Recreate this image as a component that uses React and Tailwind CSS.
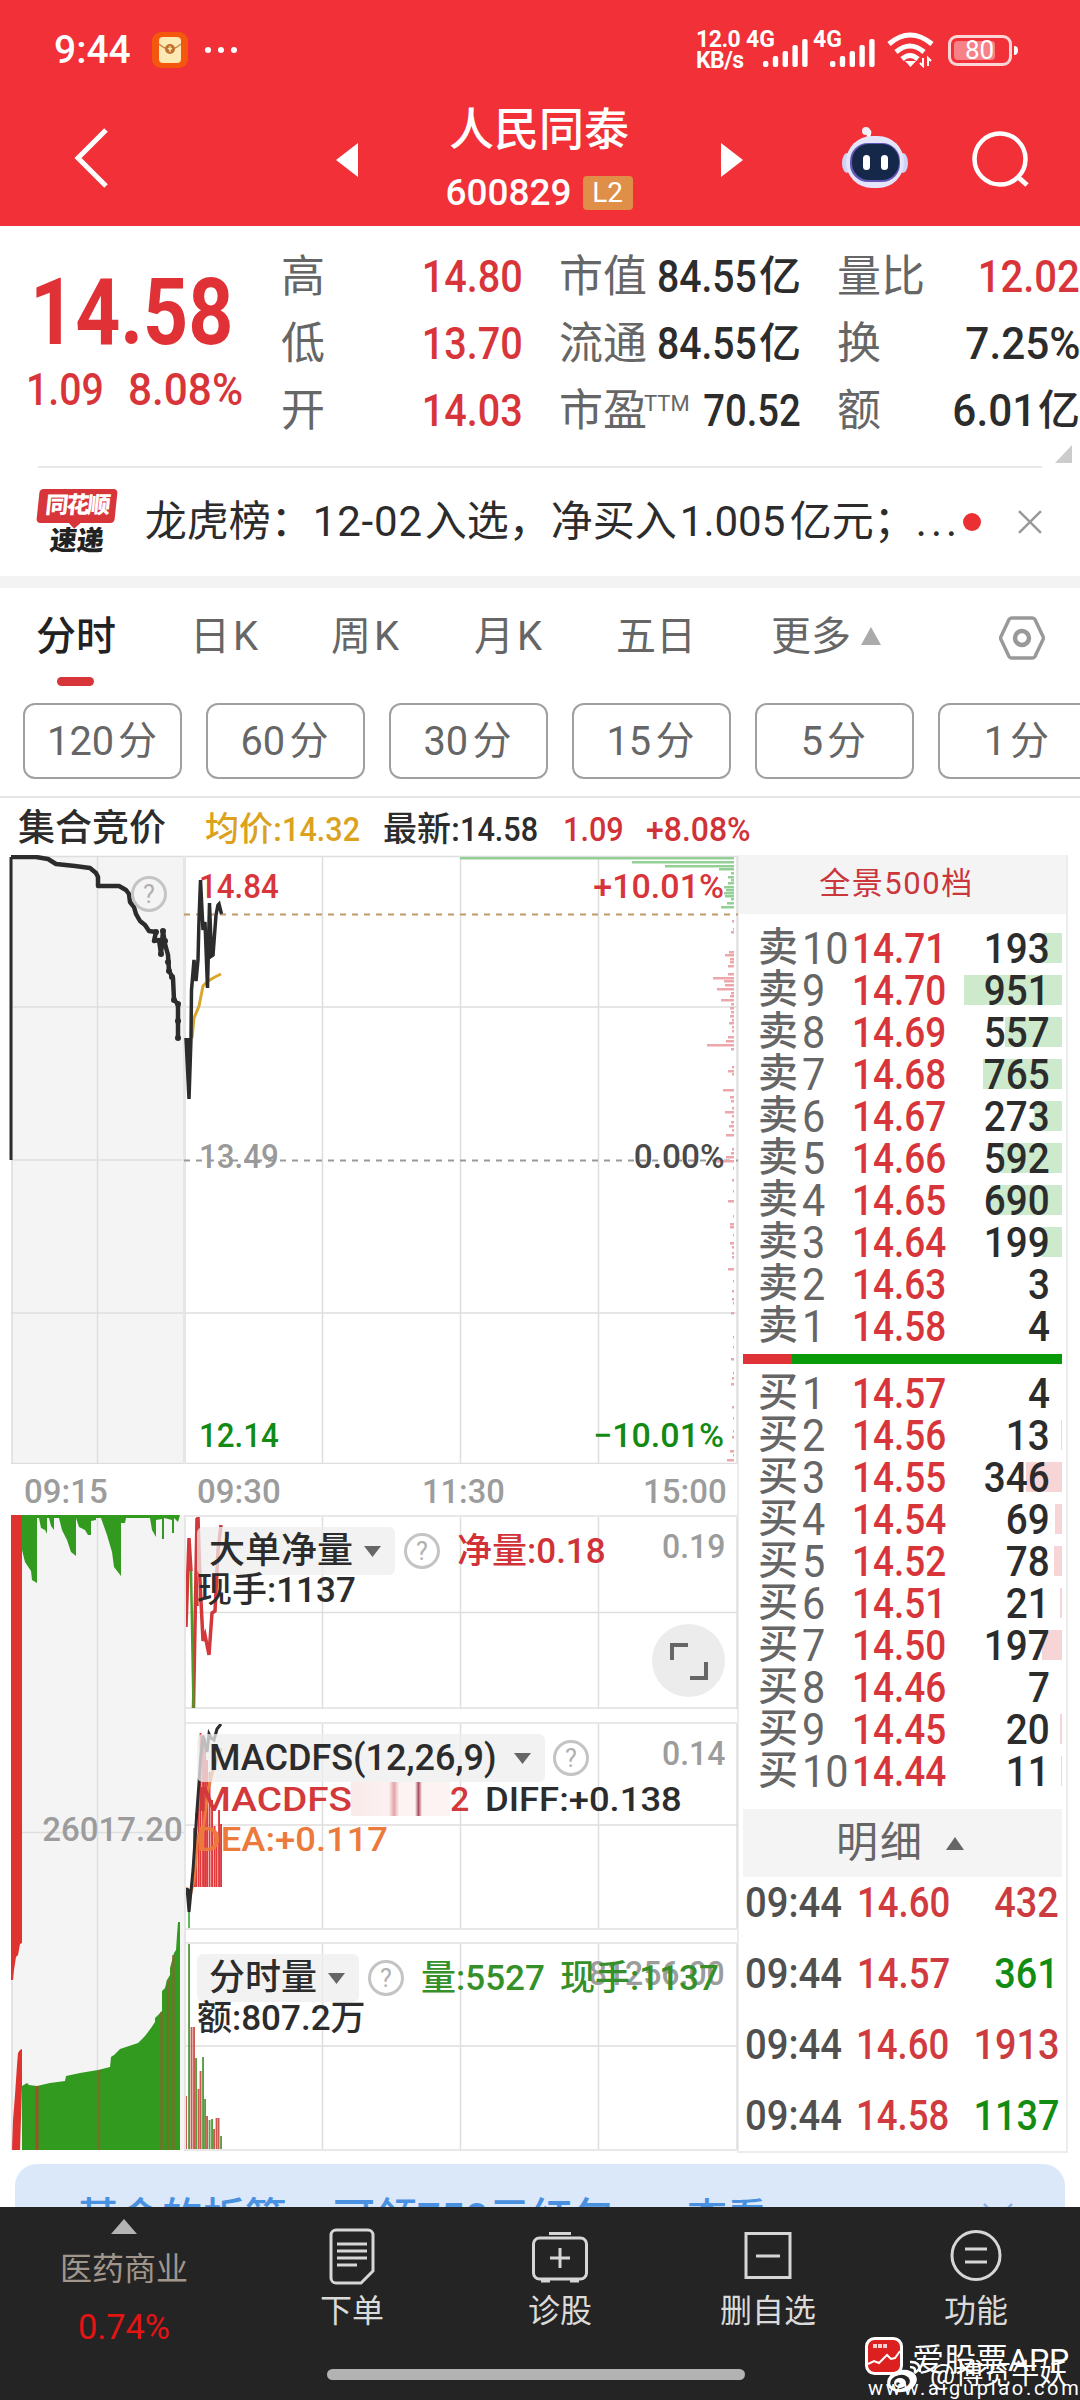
const TABS = [
  { label: '分时', cls: 'w-[154px] font-medium text-[#222]', active: true },
  { label: '日K', cls: 'w-[141px] tracking-[3px]' },
  { label: '周K', cls: 'w-[143px] tracking-[3px]' },
  { label: '月K', cls: 'w-[142px] tracking-[3px]' },
  { label: '五日', cls: 'w-[155px]' },
  { label: '更多', cls: 'w-[87px]' },
]

const MINUTES = ['120', '60', '30', '15', '5', '1']

const SELLS = [
  [10, '14.71', 193],
  [9, '14.70', 951],
  [8, '14.69', 557],
  [7, '14.68', 765],
  [6, '14.67', 273],
  [5, '14.66', 592],
  [4, '14.65', 690],
  [3, '14.64', 199],
  [2, '14.63', 3],
  [1, '14.58', 4],
]

const BUYS = [
  [1, '14.57', 4],
  [2, '14.56', 13],
  [3, '14.55', 346],
  [4, '14.54', 69],
  [5, '14.52', 78],
  [6, '14.51', 21],
  [7, '14.50', 197],
  [8, '14.46', 7],
  [9, '14.45', 20],
  [10, '14.44', 11],
]

const TRADES = [
  ['14.60', 432, true],
  ['14.57', 361, false],
  ['14.60', 1913, true],
  ['14.58', 1137, false],
]

// [y, width] of the chip distribution bars, right edge is x=734
const ASK_BARS = [
  [858, 274], [862, 102], [866, 69], [869, 15], [873, 3], [877, 6], [880, 3], [883, 6],
  [887, 10], [890, 8], [893, 10], [896, 9], [899, 3], [903, 7], [907, 13],
]
const BID_BARS = [
  [921, 2], [929, 1], [932, 3], [952, 5], [955, 9], [959, 4], [962, 4], [966, 6], [974, 6], [978, 21],
  [981, 10], [985, 9], [989, 17], [993, 3], [996, 4], [1000, 13], [1004, 3], [1008, 4], [1012, 3],
  [1016, 4], [1020, 2], [1023, 5], [1027, 2], [1031, 2], [1037, 6], [1041, 8], [1045, 27], [1049, 3],
  [1067, 2], [1071, 6], [1074, 2], [1090, 11], [1097, 4], [1101, 3], [1108, 2], [1112, 9], [1116, 2],
  [1122, 3], [1126, 5], [1130, 2], [1135, 8], [1149, 2], [1153, 3], [1157, 8], [1161, 20], [1168, 1],
  [1180, 2], [1191, 1], [1201, 6], [1216, 1], [1224, 4], [1227, 4], [1235, 1], [1243, 4], [1247, 2],
  [1253, 2], [1257, 2], [1269, 6], [1281, 1], [1291, 2], [1299, 2], [1303, 1], [1313, 3], [1337, 1],
  [1347, 1], [1359, 3], [1373, 1], [1378, 2], [1384, 3], [1407, 2], [1418, 1], [1431, 1], [1437, 2],
  [1451, 4], [1455, 1], [1460, 7],
]

const AUCTION =
  '11,857 36,857 48,859 56,864 75,866 90,868 96,873 98,877 98,886 119,886 126,890 129,894 130,902 134,907 136,914 140,921 145,925 149,931 156,932 154,941 159,940 161,954 163,931 165,944 168,955 169,971 173,978 174,1000 178,1004 178,1038'

const VOL_BARS = [
  [186, 2096, 'r'], [189, 1942, 'g'], [191.5, 2027, 'r'], [194, 2027, 'r'], [196, 2058, 'g'], [198.5, 2089, 'r'],
  [200.5, 2071, 'r'], [203, 2057, 'g'], [205, 2099, 'g'], [207, 2116, 'r'], [209.5, 2120, 'g'], [212, 2119, 'g'],
  [214, 2129, 'r'], [216.5, 2118, 'r'], [218.5, 2118, 'r'], [221, 2136, 'g'],
]
const MACD_BARS = [
  [194, 1828], [196, 1813], [198.5, 1788], [200.5, 1733], [203, 1735], [205, 1738], [207, 1760],
  [209.5, 1772], [212, 1800], [214.5, 1826], [216.5, 1832], [219, 1810], [221, 1824],
]

function Num({ children, className = '', scale = 'scale-x-[.87]' }) {
  return <span className={'inline-block ' + scale + ' ' + className}>{children}</span>
}

function Signal() {
  return (
    <svg className="mt-[4px] h-[30px] w-[45px] shrink-0" viewBox="0 0 45 30" fill="#fff">
      {[6, 11, 16, 22, 28].map((h, i) => (
        <rect key={i} x={i * 9.8} y={30 - h} width="5.4" height={h} rx="2" />
      ))}
    </svg>
  )
}

function StatusBar() {
  return (
    <div className="flex h-[100px] items-center pl-[54px] text-white">
      <span className="w-[98px] text-[39px] font-medium leading-none">9:44</span>
      <svg className="h-[36px] w-[36px]" viewBox="0 0 36 36">
        <rect width="36" height="36" rx="9" fill="#f4580f" />
        <rect x="7" y="5" width="22" height="26" rx="4" fill="#fde9b4" />
        <path d="M7 12q11 10 22 0" stroke="#c98d4b" strokeWidth="1.6" fill="none" />
        <circle cx="18" cy="17" r="5" fill="#c0722e" />
        <path d="M18 14v6M16 16l2 2 2-2" stroke="#fde9b4" strokeWidth="1.2" fill="none" />
      </svg>
      <div className="ml-[17px] flex gap-[7px]">
        <i className="size-[6px] rounded-full bg-white" />
        <i className="size-[6px] rounded-full bg-white" />
        <i className="size-[6px] rounded-full bg-white" />
      </div>
      <div className="ml-[459px] w-[50px] text-[23px] font-bold leading-[21px] tracking-[-.5px]">
        <div>12.0</div>
        <div>KB/s</div>
      </div>
      <div className="flex h-[34px] w-[67px]">
        <span className="-mr-[12px] -mt-[2px] text-[23px] font-bold leading-[18px]">4G</span>
        <Signal />
      </div>
      <div className="flex h-[34px] w-[74px]">
        <span className="-mr-[12px] -mt-[2px] text-[23px] font-bold leading-[18px]">4G</span>
        <Signal />
      </div>
      <svg className="h-[36px] w-[47px]" viewBox="0 0 47 36" fill="none" stroke="#fff">
        <path d="M2 12Q23 -6 45 12" strokeWidth="5" />
        <path d="M9 20Q23 8 37 20" strokeWidth="5" />
        <path d="M15 27Q23 20 31 27" strokeWidth="5" />
        <path d="M18 29h11l-5.500 6z" fill="#fff" stroke="none" />
        <path d="M36 26v8l-3-3M41 34v-8l3 3" strokeWidth="2" />
      </svg>
      <div className="ml-[14px] flex h-[31px] w-[64px] items-center rounded-[9px] border-[3px] border-white/80 p-[3px]">
        <div className="flex h-full w-[41px] items-center rounded-[4px] bg-white/40 pl-[11px] text-[26px] leading-none">
          80
        </div>
      </div>
      <i className="ml-[2px] h-[9px] w-[4px] rounded-r bg-white" />
    </div>
  )
}

function Robot() {
  return (
    <svg className="ml-[98px] h-[62px] w-[68px]" viewBox="0 0 68 62">
      <path d="M27 10Q31 2 25 4" stroke="#fff" strokeWidth="3.500" fill="none" />
      <circle cx="25" cy="4" r="4" fill="#f3eefc" />
      <ellipse cx="6" cy="36" rx="5" ry="10" fill="#cfd3f5" />
      <ellipse cx="62" cy="36" rx="5" ry="10" fill="#cfd3f5" />
      <rect x="5" y="9" width="58" height="52" rx="26" fill="#e4e5fb" />
      <rect x="9" y="16" width="50" height="39" rx="18" fill="#6256b4" />
      <rect x="11" y="17" width="47" height="36" rx="17" fill="#15284a" />
      <rect x="22" y="28" width="7" height="15" rx="3.500" fill="#fff" />
      <rect x="40" y="28" width="7" height="15" rx="3.500" fill="#fff" />
    </svg>
  )
}

function TitleBar() {
  return (
    <div className="flex h-[126px] text-white">
      <svg className="ml-[72px] mt-[28px] h-[60px] w-[38px]" viewBox="0 0 38 60" fill="none" stroke="#fff" strokeWidth="5">
        <path d="M34 2L6 30l28 28" />
      </svg>
      <svg className="ml-[226px] mt-[43px] h-[34px] w-[22px]" viewBox="0 0 22 34" fill="#fff">
        <path d="M22 0v34L0 17z" />
      </svg>
      <div className="ml-[79px] w-[204px] pt-[7px] text-center">
        <div className="text-[45px] font-medium leading-[48px]">人民同泰</div>
        <div className="mt-[19px] flex items-center justify-center gap-[11px]">
          <span className="text-[37px] font-medium leading-[38px]">600829</span>
          <span className="h-[34px] w-[50px] rounded-[4px] bg-[#e08f49] text-[28px] leading-[34px]">L2</span>
        </div>
      </div>
      <svg className="ml-[80px] mt-[43px] h-[34px] w-[22px]" viewBox="0 0 22 34" fill="#fff">
        <path d="M0 0v34l22-17z" />
      </svg>
      <div className="pt-[27px]">
        <Robot />
      </div>
      <svg className="ml-[63px] mt-[30px] h-[60px] w-[60px]" viewBox="0 0 60 60" fill="none" stroke="#fff" strokeWidth="4.500">
        <circle cx="28" cy="29" r="25.500" />
        <path d="M46 47l9 8" strokeWidth="5" />
      </svg>
    </div>
  )
}

function Stat({ label, value, red, unit, scale }) {
  return (
    <div className="flex h-[67px] items-center justify-between leading-none">
      <span className="flex shrink-0 whitespace-nowrap text-[44px] text-[#666]">{label}</span>
      <span
        className={
          'flex w-0 grow items-center justify-end text-[45px] font-medium ' + (red ? 'text-[#d8353a]' : 'text-[#2c2c2c]')
        }
      >
        <Num className="origin-right" scale={scale}>
          {value}
        </Num>
        {unit && <span className="ml-[2px] text-[42px]">{unit}</span>}
      </span>
    </div>
  )
}

function Quote() {
  return (
    <div className="flex h-[240px] pt-[17px]">
      <div className="w-[281px] text-[#e03236]">
        <div className="mt-[22px] h-[96px] pl-[30px] text-[92px] font-bold leading-[96px]">
          <Num className="origin-left" scale="scale-x-[.855]">
            14.58
          </Num>
        </div>
        <div className="mt-[6px] flex h-[46px] pl-[26px] text-[45px] font-medium leading-[46px] text-[#d8353a]">
          <Num className="w-[102px] origin-left">1.09</Num>
          <Num className="origin-left" scale="scale-x-[.94]">
            8.08%
          </Num>
        </div>
      </div>
      <div className="w-[242px]">
        <Stat label="高" value="14.80" scale="scale-x-[.88]" red />
        <Stat label="低" value="13.70" scale="scale-x-[.88]" red />
        <Stat label="开" value="14.03" scale="scale-x-[.88]" red />
      </div>
      <div className="ml-[36px] w-[242px]">
        <Stat label="市值" value="84.55" unit="亿" />
        <Stat label="流通" value="84.55" unit="亿" />
        <Stat
          label={
            <>
              市盈<span className="-ml-[3px] text-[22px] leading-[30px]">TTM</span>
            </>
          }
          value="70.52"
          scale="scale-x-[.85]"
        />
      </div>
      <div className="ml-[36px] w-[243px]">
        <Stat label="量比" value="12.02" scale="scale-x-[.89]" red />
        <Stat label="换" value="7.25%" scale="scale-x-[.94]" />
        <Stat label="额" value="6.01" unit="亿" scale="scale-x-[.94]" />
        <svg className="ml-[218px] mt-[1px] h-[18px] w-[17px]" viewBox="0 0 17 18" fill="#ccc">
          <path d="M17 0v18H0z" />
        </svg>
      </div>
    </div>
  )
}

function News() {
  return (
    <div className="mx-[38px] flex h-[110px] items-center border-t-2 border-[#e8e8e8]">
      <div className="w-[107px] leading-none">
        <div className="relative h-[34px] w-[78px] -skew-x-6 rounded-[4px] bg-[#d8353a] pt-[5px] text-center text-[23px] font-black tracking-[-2px] text-white">
          同花顺
          <i className="absolute -bottom-[4px] left-[34px] size-[9px] rotate-45 bg-[#d8353a]" />
        </div>
        <div className="mt-[5px] w-[78px] -skew-x-6 text-center text-[27px] font-black text-[#222]">速递</div>
      </div>
      <div className="flex w-[820px] whitespace-nowrap text-[42px] leading-none text-[#2c2c2c]">
        <span>龙虎榜：</span>
        <span className="w-[112px] tracking-[.8px]">12-02</span>
        <span className="w-[255px]">入选，净买入</span>
        <span className="w-[110px]">1.005</span>
        <span>亿元；</span>
        <span className="tracking-[4px]">...</span>
      </div>
      <i className="size-[18px] rounded-full bg-[#ea3033]" />
      <svg className="ml-[37px] h-[24px] w-[24px]" viewBox="0 0 24 24" stroke="#999" strokeWidth="2.500">
        <path d="M1 1l22 22M23 1L1 23" />
      </svg>
    </div>
  )
}

function Tabs() {
  return (
    <div className="flex h-[115px] pl-[36px] pt-[28px] text-[40px] leading-[42px] text-[#666]">
      {TABS.map((t) => (
        <div key={t.label} className={t.cls}>
          {t.label}
          {t.active && <i className="ml-[21px] mt-[19px] block h-[9px] w-[37px] rounded-full bg-[#d8353a]" />}
        </div>
      ))}
      <svg className="ml-[3px] mt-[11px] h-[18px] w-[20px]" viewBox="0 0 20 18" fill="#aaa">
        <path d="M10 0l10 18H0z" />
      </svg>
      <svg className="ml-[118px] h-[44px] w-[46px]" viewBox="0 0 46 44" fill="none" stroke="#999" strokeWidth="3.500">
        <path d="M12.500 2h21a3 3 0 0 1 2.500 1.500l8 17a3 3 0 0 1 0 3l-8 17a3 3 0 0 1-2.500 1.500h-21a3 3 0 0 1-2.500-1.500l-8-17a3 3 0 0 1 0-3l8-17a3 3 0 0 1 2.500-1.500z" />
        <circle cx="23" cy="22" r="7" strokeWidth="4.500" />
      </svg>
    </div>
  )
}

function Minutes() {
  return (
    <div className="flex h-[95px] gap-[24px] overflow-hidden border-b-2 border-[#e6e6e6] pl-[23px]">
      {MINUTES.map((m) => (
        <div
          key={m}
          className="flex h-[76px] w-[159px] shrink-0 items-center justify-center rounded-[12px] border-2 border-[#a0a0a0] pr-[3px] text-[39px] leading-none text-[#666]"
        >
          <span className="origin-right scale-x-[.97] text-[41px]">{m}</span>
          <span className="ml-[4px]">分</span>
        </div>
      ))}
    </div>
  )
}

function InfoRow() {
  return (
    <div className="flex h-[57px] items-center pl-[18px] pt-[4px] text-[34px] font-medium leading-none">
      <span className="w-[187px] text-[37px] text-[#2c2c2c]">集合竞价</span>
      <span className="flex w-[178px] text-[#dba21e]">
        均价:
        <Num className="origin-left" scale="scale-x-[.9]">
          14.32
        </Num>
      </span>
      <span className="flex w-[180px] text-[#2c2c2c]">
        最新:
        <Num className="origin-left" scale="scale-x-[.9]">
          14.58
        </Num>
      </span>
      <Num className="w-[83px] origin-left text-[#d13238]" scale="scale-x-[.9]">
        1.09
      </Num>
      <Num className="origin-left text-[#d13238]" scale="scale-x-[.94]">
        +8.08%
      </Num>
    </div>
  )
}

function Help({ className = '' }) {
  return (
    <span
      className={
        'flex size-[36px] shrink-0 items-center justify-center rounded-full border-[3px] border-[#c4c4c4] text-[25px] leading-none text-[#b0b0b0] ' +
        className
      }
    >
      ?
    </span>
  )
}

function MainChart() {
  return (
    <div className="relative h-[609px]">
      <svg className="absolute inset-0 h-[609px] w-[738px]" viewBox="0 855 738 609" fill="none">
        <rect x="11" y="856" width="173" height="608" fill="#f4f4f4" />
        <g stroke="#dedede" strokeWidth="1.500">
          <path d="M11 856.500H738M11 1007H738M11 1160H184M11 1313H738M11 1463.500H738" />
          <path d="M12 856V1464M97.500 856V1464M322.500 856V1464M460.500 856V1464M598.500 856V1464M737 856V1464" />
        </g>
        <path d="M184.500 856V1464" stroke="#e6e6e6" strokeWidth="3" />
        <path d="M184 914.500H738" stroke="#c09a66" strokeWidth="2" strokeDasharray="6 6" />
        <path d="M184 1160.500H738" stroke="#999" strokeWidth="2" strokeDasharray="6 6" />
        {ASK_BARS.map(([y, w]) => (
          <rect key={y} x={734 - w} y={y - 1} width={w} height="2.500" fill="#93d096" />
        ))}
        {BID_BARS.map(([y, w]) => (
          <rect key={y} x={734 - w} y={y - 1} width={w} height="2.500" fill="#eda6aa" />
        ))}
        <path d="M11 857V1160" stroke="#2c2c2c" strokeWidth="3" />
        <polyline points={AUCTION} stroke="#2c2c2c" strokeWidth="4.500" strokeLinejoin="round" />
        {[[156, 932], [163, 931], [161, 954], [165, 941], [168, 962], [169, 971], [172, 977], [174, 1000], [178, 1004], [178, 1021], [178, 1038]].map(
          ([x, y], i) => (
            <circle key={i} cx={x} cy={y} r="3" fill="#2c2c2c" />
          )
        )}
        <polyline points="192,1038 194,1018 199,1006 203,986 208,981 215,977 221,974" stroke="#d9a72b" strokeWidth="3" />
        <polyline
          points="186,1038 189,1099 191,1038 191.500,990 194,960 196,981 198,960 199,920 200.500,880 203,930 205,922 207.500,988 209.500,903 211.500,956 213,955 216,915 218,905 219,904 221.500,914"
          stroke="#2c2c2c"
          strokeWidth="3.500"
        />
        <path d="M186 1038h5l-2 61z" fill="#2c2c2c" />
      </svg>
      <Help className="absolute left-[131px] top-[21px]" />
      <div className="absolute inset-0 pl-[199px] pr-[13px] text-[34px] font-medium leading-[34px]">
        <div className="flex justify-between pt-[14px] text-[#d8353a]">
          <Num className="origin-left" scale="scale-x-[.92]">
            14.84
          </Num>
          <Num className="origin-right" scale="scale-x-[1]">
            +10.01%
          </Num>
        </div>
        <div className="mt-[236px] flex justify-between">
          <Num className="origin-left text-[#999]" scale="scale-x-[.92]">
            13.49
          </Num>
          <Num className="origin-right text-[#4a4a4a]" scale="scale-x-[.98]">
            0.00%
          </Num>
        </div>
        <div className="mt-[245px] flex justify-between text-[#138a13]">
          <Num className="origin-left" scale="scale-x-[.92]">
            12.14
          </Num>
          <Num className="origin-right" scale="scale-x-[1]">
            −10.01%
          </Num>
        </div>
      </div>
    </div>
  )
}

function TimeAxis() {
  return (
    <div className="flex h-[51px] items-center pl-[24px] pt-[3px] text-[34px] font-medium leading-none text-[#9c9c9c]">
      <Num className="w-[173px] origin-left" scale="scale-x-[.97]">
        09:15
      </Num>
      <Num className="w-[225px] origin-left" scale="scale-x-[.97]">
        09:30
      </Num>
      <Num className="w-[221px] origin-left" scale="scale-x-[.96]">
        11:30
      </Num>
      <Num className="origin-left" scale="scale-x-[.97]">
        15:00
      </Num>
    </div>
  )
}

function AuctionVolume() {
  return (
    <div className="relative h-[636px] w-[184px] shrink-0">
      <svg className="absolute inset-0 h-[636px] w-[184px]" viewBox="0 1515 184 636">
        <rect x="11" y="1515" width="173" height="635" fill="#f4f4f4" />
        <path d="M97.500 1515V2150M11 1832.500H184M12 1515V2150" stroke="#dedede" strokeWidth="1.500" />
        <path
          d="M20 1515L22 1550 25 1562 31 1571 32 1580 37 1583V1518H39L41 1528 45 1530 47 1534V1518H49L51 1526 54 1530V1518H59L62 1530 67 1540 71 1552 76 1556V1518L79 1527 85 1530 88 1535H91V1521L96 1520 96 1518H101L107 1535 112 1552 114 1567 121 1576V1523L125 1523 126 1518 150 1518 152 1530 156 1537V1520L162 1519V1539H164V1518L172 1520V1533H174V1518L178 1522 180 1515z"
          fill="#329a1e"
        />
        <path
          d="M22 2150V2086L27 2083 29 2085 37 2086 50 2083 65 2081 66 2076 80 2073 98 2070 110 2067 111 2057 114 2055 120 2049 138 2043 145 2036 151 2028 155 2022 155 2018 162 2011V1991L165 1988 167 1980 170 1975 170 1968 174 1953 176 1950 177 1935 178 1922H180V2150z"
          fill="#329a1e"
        />
        <path d="M37 2086V2150" stroke="#9a5526" strokeWidth="3" />
        <path d="M99 2070V2150M161.500 2012V2150M168 1980V2150M173.500 1955V2150" stroke="#75702a" strokeWidth="2.500" />
        <path d="M11 1515H22V1943L20 1944 18 1955 16 1957 14 1970 13 1980H11z" fill="#df3330" />
        <path d="M12 2150L13 2120 15 2095 17 2065 18 2053 20 2050 22 2049V2086L20 2150z" fill="#df3330" />
      </svg>
      <div className="absolute right-[1px] top-[297px] text-[34px] font-medium leading-[34px] text-[#9c9c9c]">
        <Num className="origin-right" scale="scale-x-[.97]">
          26017.20
        </Num>
      </div>
    </div>
  )
}

function Picker({ children }) {
  return (
    <div className="flex h-[48px] items-center gap-[11px] rounded-[6px] bg-[#ededed]/75 pl-[12px] pr-[14px] text-[36px] font-medium text-[#2c2c2c]">
      {children}
      <svg className="h-[11px] w-[17px] shrink-0" viewBox="0 0 17 11" fill="#666">
        <path d="M0 0h17l-8.500 11z" />
      </svg>
    </div>
  )
}

const GRID = 'M322.500 1500V2160M460.500 1500V2160M598.500 1500V2160M737 1500V2160'

function PanelMax({ children }) {
  return (
    <Num className="absolute right-[13px] top-[12px] origin-right text-[34px] font-medium text-[#9c9c9c]" scale="scale-x-[.94]">
      {children}
    </Num>
  )
}

function BigOrderPanel() {
  return (
    <div className="relative h-[194px] border-y-2 border-[#e8e8e8] pl-[13px] leading-none">
      <svg className="absolute inset-0 h-[192px] w-[554px]" viewBox="184 1516 554 192" fill="none">
        <path d={GRID + 'M184 1611.500H738'} stroke="#dedede" strokeWidth="1.500" />
        <g strokeWidth="3.500" stroke="#d3383b">
          <polyline points="186,1626 189,1537 191,1570" />
          <path d="M196 1575l1 30M197 1517l-3.500 190" />
          <polyline points="198,1516 200,1580 203,1640 205,1634 209,1654 212,1612 215,1610 218,1550 221,1524" />
          <path d="M191 1570L193.500 1707" stroke="#4a9a2a" strokeWidth="2.500" />
        </g>
      </svg>
      <div className="relative flex items-center pt-[10px]">
        <Picker>大单净量</Picker>
        <Help className="ml-[9px]" />
        <span className="ml-[17px] flex text-[35px] font-medium text-[#d13238]">
          净量:
          <Num className="origin-left" scale="scale-x-[1]">
            0.18
          </Num>
        </span>
        <PanelMax>0.19</PanelMax>
      </div>
      <div className="relative text-[35px] font-medium leading-[32px] text-[#2c2c2c]">现手:1137</div>
      <div className="absolute right-[13px] top-[107px] flex size-[73px] items-center justify-center rounded-full bg-[#ececec]">
        <svg className="h-[38px] w-[38px]" viewBox="0 0 38 38" fill="none" stroke="#666" strokeWidth="4">
          <path d="M2 18V3H18M20 36H36V20" />
        </svg>
      </div>
    </div>
  )
}

function MacdPanel() {
  return (
    <div className="relative mt-[13px] h-[208px] border-y-2 border-[#e8e8e8] pl-[13px] leading-none">
      <svg className="absolute inset-0 h-[204px] w-[554px]" viewBox="184 1724 554 204" fill="none">
        <path d={GRID + 'M184 1825H738'} stroke="#dedede" strokeWidth="1.500" />
        {MACD_BARS.map(([x, y]) => (
          <rect key={x} x={x - 0.9} y={y} width="1.900" height={1887 - y} fill="#e0393b" />
        ))}
        <polyline points="186,1888 191,1892 194,1880 198,1835 203,1832 208,1790 213,1770 221,1748" stroke="#ec7a3c" strokeWidth="3" />
        <polyline
          points="187,1888 189,1912 193,1870 197,1810 199,1783 200.500,1760 203,1736 207,1752 209,1734 211,1738 214,1740 217,1729 221,1724"
          stroke="#2c2c2c"
          strokeWidth="3"
        />
        <path d="M186 1888l3 24 3-22z" fill="#2c2c2c" />
        <path d="M189 1912V1930" stroke="#5cb85c" strokeWidth="2" />
      </svg>
      <div className="relative flex items-center pt-[10px]">
        <Picker>
          <span className="w-[294px] whitespace-nowrap">MACDFS(12,26,9)</span>
        </Picker>
        <Help className="ml-[8px]" />
        <PanelMax>0.14</PanelMax>
      </div>
      <div className="relative flex h-[34px] items-center text-[34px] leading-[32px] text-[#2c2c2c]">
        <span className="w-[154px] origin-left scale-x-[1.140] font-medium text-[#d3383b]">MACDFS</span>
        <span className="flex h-[34px] w-[99px] bg-gradient-to-r from-[#faeaea] via-[#fdf3f3] to-[#fdf3f3] pl-[38px]">
          <i className="h-full w-[10px] bg-gradient-to-r from-transparent via-[#e3a2a8] to-transparent" />
          <i className="ml-[16px] h-full w-[7px] bg-gradient-to-r from-transparent via-[#a8505e] to-transparent" />
        </span>
        <span className="w-[35px] font-medium text-[#d3383b]">2</span>
        <span className="origin-left scale-x-[1.070] font-medium">DIFF:+0.138</span>
      </div>
      <div className="relative mt-[5px] w-[176px] origin-left scale-x-[1.070] text-[34px] font-medium leading-[36px] text-[#ec7a3c]">
        DEA:+0.117
      </div>
    </div>
  )
}

function VolumePanel() {
  return (
    <div className="relative mt-[12px] h-[209px] border-y-2 border-[#e8e8e8] pl-[13px] leading-none">
      <svg className="absolute inset-0 h-[205px] w-[554px]" viewBox="184 1944 554 205" fill="none">
        <path d={GRID + 'M184 2046H738'} stroke="#dedede" strokeWidth="1.500" />
        {VOL_BARS.map(([x, y, c]) => (
          <rect key={x} x={x - 0.9} y={y} width="1.900" height={2149 - y} fill={c === 'r' ? '#cc5a50' : '#5a9e42'} />
        ))}
      </svg>
      <div className="relative flex items-center pt-[10px]">
        <Picker>分时量</Picker>
        <Help className="ml-[9px]" />
        <PanelMax>81256.00</PanelMax>
        <span className="relative ml-[17px] flex w-[139px] text-[35px] font-medium text-[#35902a]">量:5527</span>
        <span className="relative text-[35px] font-medium text-[#35902a]">现手:1137</span>
      </div>
      <div className="relative text-[35px] font-medium leading-[34px] text-[#2c2c2c]">额:807.2万</div>
    </div>
  )
}

function OrderRow({ side, level, price, qty }) {
  return (
    <div className="relative flex h-[42px] items-center pl-[15px] leading-none">
      {/* depth bar behind the quantity */}
      <i
        className={'absolute right-0 top-[6px] h-[30px] ' + (side === '卖' ? 'bg-[#cdeacd]' : 'bg-[#f7d4d6]')}
        style={{ width: qty < 10 ? 0 : qty * 0.103 }}
      />
      <span className="relative w-[44px] text-[40px] font-medium text-[#666]">{side}</span>
      <Num className="relative w-[50px] origin-left text-[45px] text-[#666]" scale="scale-x-[.92]">
        {level}
      </Num>
      <Num className="relative origin-left pt-[2px] text-[42px] font-medium text-[#d8353a]" scale="scale-x-[.88]">
        {price}
      </Num>
      <Num className="relative ml-auto mr-[12px] origin-right pt-[2px] text-[42px] font-medium text-[#2c2c2c]" scale="scale-x-[.92]">
        {qty}
      </Num>
    </div>
  )
}

function OrderBook() {
  return (
    <div className="h-[1298px] w-[331px] border-x-2 border-b-2 border-[#ececec]">
      <div className="h-[59px] bg-[#f4f4f4] pr-[12px] text-center text-[31px] leading-[58px] tracking-[1.500px] text-[#cb363b]">
        全景500档
      </div>
      <div className="ml-[4px] w-[319px] pt-[13px]">
        {SELLS.map(([n, p, q]) => (
          <OrderRow key={n} side="卖" level={n} price={p} qty={q} />
        ))}
        <div className="mt-[7px] flex h-[10px] bg-[#099a09]">
          <i className="w-[49px] bg-[#df3236]" />
        </div>
        <div className="pt-[8px]">
          {BUYS.map(([n, p, q]) => (
            <OrderRow key={n} side="买" level={n} price={p} qty={q} />
          ))}
        </div>
        <div className="mt-[17px] flex h-[68px] items-center bg-[#f4f4f4] pl-[93px] text-[42px] leading-none tracking-[2px] text-[#666]">
          明细
          <svg className="ml-[22px] h-[13px] w-[18px]" viewBox="0 0 18 13" fill="#666">
            <path d="M9 0l9 13H0z" />
          </svg>
        </div>
        <div className="-mt-[10px]">
          {TRADES.map(([price, qty, up], i) => (
            <div key={i} className="flex h-[71px] items-center pl-[2px] text-[42px] font-medium leading-none">
              <Num className="w-[112px] origin-left text-[#505050]" scale="scale-x-[.91]">
                09:44
              </Num>
              <Num className="origin-left text-[#d13a3e]">{price}</Num>
              <Num
                className={'ml-auto mr-[3px] origin-right ' + (up ? 'text-[#cc3b40]' : 'text-[#128c12]')}
                scale="scale-x-[.9]"
              >
                {qty}
              </Num>
            </div>
          ))}
        </div>
      </div>
    </div>
  )
}

const NAV = [
  {
    label: '下单',
    icon: (
      <>
        <path d="M11 3H43a5 5 0 0 1 5 5V44L36 56H11a5 5 0 0 1-5-5V8a5 5 0 0 1 5-5z" />
        <path d="M12 17H42M12 24H42M12 31H42M12 38H32" />
      </>
    ),
  },
  {
    label: '诊股',
    icon: (
      <>
        <rect x="0.500" y="11" width="53" height="41" rx="6" />
        <path d="M16 6.500H38M27 21V41M17 31H37M8 54H17M37 54H46" />
      </>
    ),
  },
  {
    label: '删自选',
    icon: (
      <>
        <rect x="5" y="6.500" width="44" height="44" />
        <path d="M15 29H39" />
      </>
    ),
  },
  {
    label: '功能',
    icon: (
      <>
        <circle cx="27" cy="28.500" r="24" />
        <path d="M16 22H38M16 35H38" />
      </>
    ),
  },
]

function WatermarkLogo() {
  return (
    <div className="absolute left-[864px] top-[129px] h-[64px] w-[216px] leading-none text-white">
      <svg className="absolute left-[1px] top-[1px] h-[38px] w-[38px]" viewBox="0 0 38 38">
        <rect x="1.500" y="1.500" width="35" height="35" rx="8" fill="#dc2020" stroke="#fff" strokeWidth="3" />
        <path d="M3 27l6-3 5 2 8-8 4 4 4-1 5-7" stroke="#fff" strokeWidth="2" fill="none" />
        <path d="M8 9h15" stroke="#fbd0d0" strokeWidth="4" strokeDasharray="4 1" />
      </svg>
      <div className="absolute left-[48px] top-[8px] whitespace-nowrap text-[32px]">爱股票APP</div>
      <svg className="absolute left-[21px] top-[22px] h-[36px] w-[38px]" viewBox="0 0 38 36" fill="none">
        <ellipse cx="17" cy="23" rx="15" ry="11" transform="rotate(-12 17 23)" fill="#fff" />
        <ellipse cx="15" cy="24" rx="10" ry="7" transform="rotate(-12 15 24)" fill="#242424" />
        <ellipse cx="15" cy="25" rx="6" ry="5" fill="#fff" />
        <circle cx="13" cy="26" r="1.800" fill="#242424" />
        <path d="M25 4q10-1 10 10M25 9q6 0 5 5" stroke="#fff" strokeWidth="2.500" />
      </svg>
      <div className="absolute left-[66px] top-[25px] whitespace-nowrap text-[28px]">@博览牛妖</div>
      <div className="absolute left-[4px] top-[42px] text-[20px] tracking-[2.700px]">www.aigupiao.com</div>
    </div>
  )
}

function BottomNav() {
  return (
    <div className="relative flex h-[193px] bg-[#242424] text-[32px] leading-none text-[#dadada]">
      <div className="flex w-[248px] flex-col items-center pt-[12px]">
        <svg className="h-[15px] w-[26px]" viewBox="0 0 26 15" fill="#b4b4b4">
          <path d="M13 0l13 15H0z" />
        </svg>
        <span className="mt-[19px] text-[#a0968c]">医药商业</span>
        <span className="mt-[25px] text-[35px] text-[#e31414]">
          <Num scale="scale-x-[.98]">0.74%</Num>
        </span>
      </div>
      {NAV.map((n) => (
        <div key={n.label} className="flex w-[208px] flex-col items-center pt-[20px]">
          <svg className="h-[60px] w-[58px]" viewBox="-2 0 58 60" fill="none" stroke="#d6d6d6" strokeWidth="3">
            {n.icon}
          </svg>
          <span className="mt-[8px]">{n.label}</span>
        </div>
      ))}
      <i className="absolute left-[327px] top-[162px] h-[11px] w-[418px] rounded-full bg-[#b3b3b3]" />
      <WatermarkLogo />
    </div>
  )
}

export default function App() {
  return (
    <div className="h-[2400px] w-[1080px] overflow-hidden bg-white font-['Roboto','Noto_Sans_CJK_SC',sans-serif]">
      <div className="bg-[#f13038]">
        <StatusBar />
        <TitleBar />
      </div>
      <Quote />
      <News />
      <div className="h-[12px] bg-[#f3f3f3]" />
      <Tabs />
      <Minutes />
      <InfoRow />
      <div className="flex h-[1309px]">
        <div className="w-[737px] shrink-0">
          <MainChart />
          <TimeAxis />
          <div className="flex">
            <AuctionVolume />
            <div className="relative w-[554px] shrink-0">
              <BigOrderPanel />
              <MacdPanel />
              <VolumePanel />
              <i className="absolute inset-y-0 left-0 w-[2px] bg-[#e6e6e6]" />
            </div>
          </div>
        </div>
        <OrderBook />
      </div>
      <div className="mx-[15px] flex h-[43px] overflow-hidden rounded-t-[22px] bg-[#dbe8fa] pl-[62px] pt-[33px] text-[42px] font-medium leading-[44px] text-[#4a90e0]">
        <span className="w-[256px]">基金的折算</span>
        <span className="w-[354px]">可领750元红包</span>
        <span className="w-[296px] text-[40px]">查看</span>
        <svg className="mt-[6px] h-[30px] w-[30px]" viewBox="0 0 30 30" stroke="#8db4e6" strokeWidth="2.500">
          <path d="M1 1l28 28M29 1L1 29" />
        </svg>
      </div>
      <BottomNav />
    </div>
  )
}
